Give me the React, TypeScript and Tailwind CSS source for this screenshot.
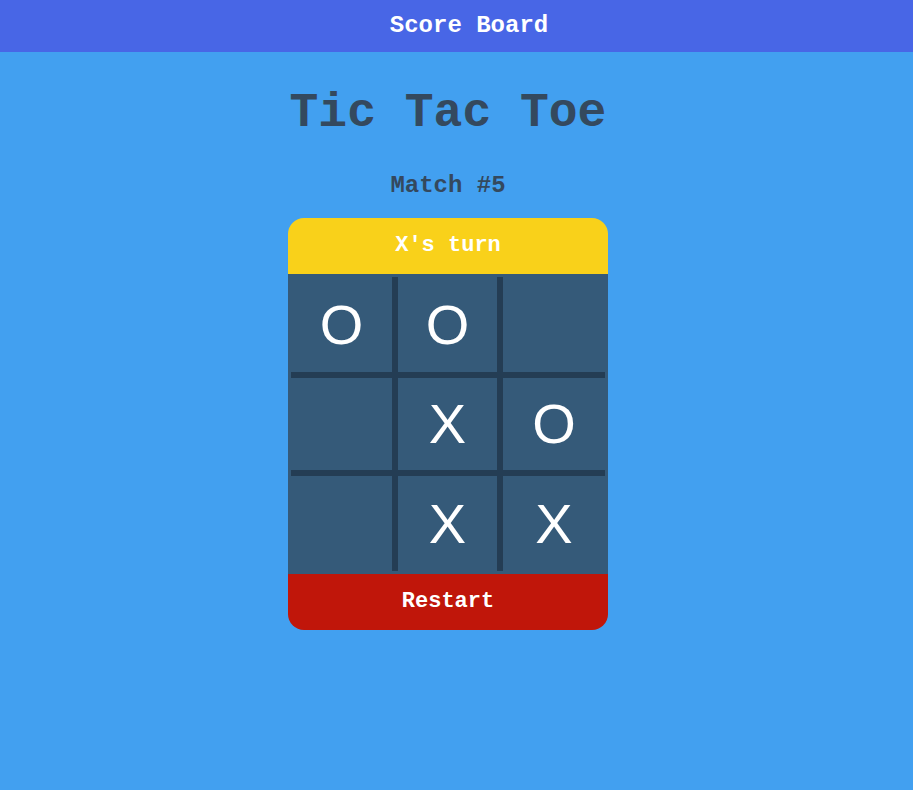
import { useState } from 'react';

const MONO = "font-['Liberation_Mono','Courier_New',monospace]";

const START: string[] = ['O', 'O', '', '', 'X', 'O', '', 'X', 'X'];

export default function App() {
    const [cells, setCells] = useState<string[]>(START);
    const [turn, setTurn] = useState<'X' | 'O'>('X');

    const play = (i: number) => {
        if (cells[i]) return;
        const next = [...cells];
        next[i] = turn;
        setCells(next);
        setTurn(turn === 'X' ? 'O' : 'X');
    };

    const restart = () => {
        setCells(Array(9).fill(''));
        setTurn('X');
    };

    return (
        <div className={`min-h-screen bg-[#42a0f0] ${MONO}`}>
            {/* Header */}
            <header className="h-[52px] flex items-center justify-center pl-[25px] bg-[#4866e6]">
                <span className="text-[24px] leading-[24px] font-bold text-white">Score Board</span>
            </header>

            <main className="w-[896px] flex flex-col items-center">
                <h1 className="mt-[37px] text-[48px] leading-[48px] font-bold text-[#34495e]">Tic Tac Toe</h1>
                <p className="mt-[37px] text-[24px] leading-[24px] font-bold text-[#34495e]">Match #5</p>

                {/* Board card */}
                <div className="mt-[20px] w-[320px] rounded-[16px] overflow-hidden">
                    <div className="h-[56px] flex items-center justify-center bg-[#f9d11a]">
                        <span className="text-[22px] leading-[22px] font-bold text-white">{turn}'s turn</span>
                    </div>

                    <div className="bg-[#355a79] p-[3px]">
                        <div className="grid grid-cols-[101px_99px_102px] grid-rows-[95px_92px_95px] gap-[6px] bg-[#243d54]">
                            {cells.map((c, i) => (
                                <button
                                    key={i}
                                    onClick={() => play(i)}
                                    className="bg-[#355a79] flex items-center justify-center text-white text-[56px] leading-none font-['Liberation_Sans',Arial,sans-serif]"
                                >
                                    {c}
                                </button>
                            ))}
                        </div>
                    </div>

                    <button
                        onClick={restart}
                        className="w-full h-[56px] flex items-center justify-center bg-[#c0160a] text-white text-[22px] leading-[22px] font-bold"
                    >
                        Restart
                    </button>
                </div>
            </main>
        </div>
    );
}
